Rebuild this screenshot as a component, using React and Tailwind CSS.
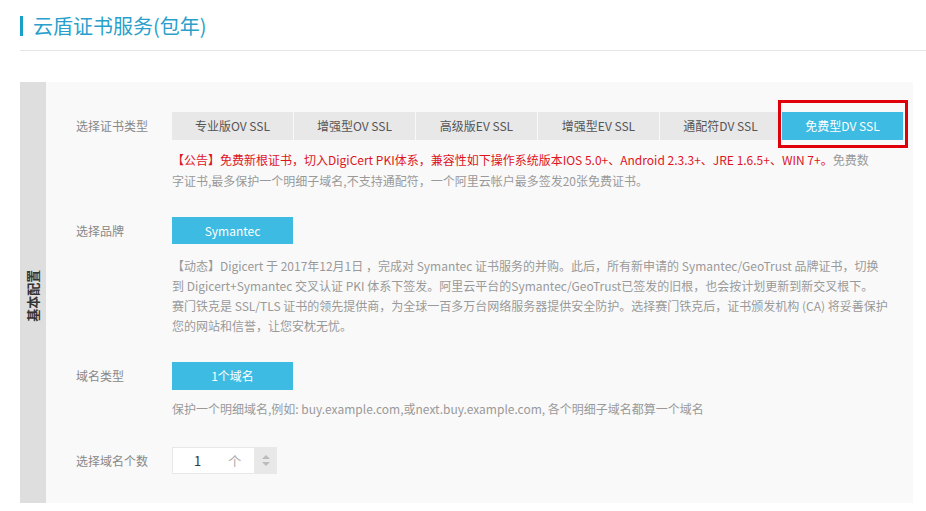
import React from "react";

const font = { fontFamily: '"Noto Sans CJK SC", "Noto Sans", sans-serif' };

const tabs = ["专业版OV SSL", "增强型OV SSL", "高级版EV SSL", "增强型EV SSL", "通配符DV SSL", "免费型DV SSL"];

const Label = ({ children }) => (
  <div className="w-[96px] shrink-0 text-[12px] text-[#888]">{children}</div>
);

export default function App() {
  return (
    <div className="w-[926px] h-[511px] bg-white overflow-hidden relative" style={font}>
      {/* title */}
      <div className="flex items-center pl-[20px] pt-[10px] h-[42px]">
        <div className="w-[3px] h-[20px] bg-[#1a9fc8]" />
        <div className="ml-[10px] text-[20px] leading-[22px] text-[#2a9fcb]">云盾证书服务(包年)</div>
      </div>
      <div className="ml-[20px] mt-[8px] h-px bg-[#e5e5e5]" />

      {/* panel */}
      <div className="ml-[20px] mt-[31px] w-[893px] h-[421px] flex">
        <div className="w-[26px] bg-[#dedede] flex items-center justify-center">
          <div className="-rotate-90 whitespace-nowrap text-[13px] font-bold text-[#333] mt-[6px]">基本配置</div>
        </div>
        <div className="flex-1 bg-[#f9f9f9] pl-[30px] pt-[30px]">
          {/* row 1 */}
          <div className="flex items-center h-[28px]">
            <Label>选择证书类型</Label>
            <div className="flex gap-px relative">
              {tabs.map((t, i) => (
                <div
                  key={t}
                  className={
                    i === 5
                      ? "w-[121px] h-[28px] flex items-center justify-center text-[12px] bg-[#3dbbe2] text-white"
                      : "w-[121px] h-[28px] flex items-center justify-center text-[12px] bg-[#e8e8e8] text-[#555]"
                  }
                >
                  {t}
                </div>
              ))}
              <div className="absolute left-[606px] top-[-12px] w-[130px] h-[48px] border-[3px] border-[#e0000a]" />
            </div>
          </div>
          <div className="ml-[96px] mt-[9px] text-[12px] leading-[21px] whitespace-nowrap">
            <div>
              <span className="text-[#e0141e]">【公告】免费新根证书，切入DigiCert PKI体系，兼容性如下操作系统版本IOS 5.0+、Android 2.3.3+、JRE 1.6.5+、WIN 7+。</span>
              <span className="text-[#999]">免费数</span>
            </div>
            <div className="text-[#999]">字证书,最多保护一个明细子域名,不支持通配符，一个阿里云帐户最多签发20张免费证书。</div>
          </div>

          {/* row 2 */}
          <div className="flex items-center h-[27px] mt-[26px]">
            <Label>选择品牌</Label>
            <div className="w-[121px] h-[27px] flex items-center justify-center text-[12px] bg-[#3dbbe2] text-white">Symantec</div>
          </div>
          <div className="ml-[96px] mt-[12px] text-[12px] leading-[20px] text-[#999] whitespace-nowrap">
            <div>【动态】Digicert 于 2017年12月1日 ，完成对 Symantec 证书服务的并购。此后，所有新申请的 Symantec/GeoTrust 品牌证书，切换</div>
            <div>到 Digicert+Symantec 交叉认证 PKI 体系下签发。阿里云平台的Symantec/GeoTrust已签发的旧根，也会按计划更新到新交叉根下。</div>
            <div>赛门铁克是 SSL/TLS 证书的领先提供商，为全球一百多万台网络服务器提供安全防护。选择赛门铁克后，证书颁发机构 (CA) 将妥善保护</div>
            <div>您的网站和信誉，让您安枕无忧。</div>
          </div>

          {/* row 3 */}
          <div className="flex items-center h-[28px] mt-[26px]">
            <Label>域名类型</Label>
            <div className="w-[121px] h-[28px] flex items-center justify-center text-[12px] bg-[#3dbbe2] text-white">1个域名</div>
          </div>
          <div className="ml-[96px] mt-[9px] text-[12px] leading-[20px] text-[#999] whitespace-nowrap">
            保护一个明细域名,例如: buy.example.com,或next.buy.example.com, 各个明细子域名都算一个域名
          </div>

          {/* row 4 */}
          <div className="flex items-center h-[27px] mt-[28px]">
            <Label>选择域名个数</Label>
            <div className="flex h-[27px]">
              <div className="w-[83px] h-[27px] bg-white border border-[#e8e8e8] flex items-center text-[13px]">
                <span className="ml-[21px] text-[#333]">1</span>
                <span className="ml-[27px] text-[#aaa]">个</span>
              </div>
              <div className="w-[22px] h-[27px] bg-[#e8e8e8] flex flex-col items-center justify-center gap-[3px]">
                <div className="w-0 h-0 border-l-[4px] border-r-[4px] border-b-[4px] border-l-transparent border-r-transparent border-b-[#bbb]" />
                <div className="w-0 h-0 border-l-[4px] border-r-[4px] border-t-[4px] border-l-transparent border-r-transparent border-t-[#bbb]" />
              </div>
            </div>
          </div>
        </div>
      </div>
    </div>
  );
}
